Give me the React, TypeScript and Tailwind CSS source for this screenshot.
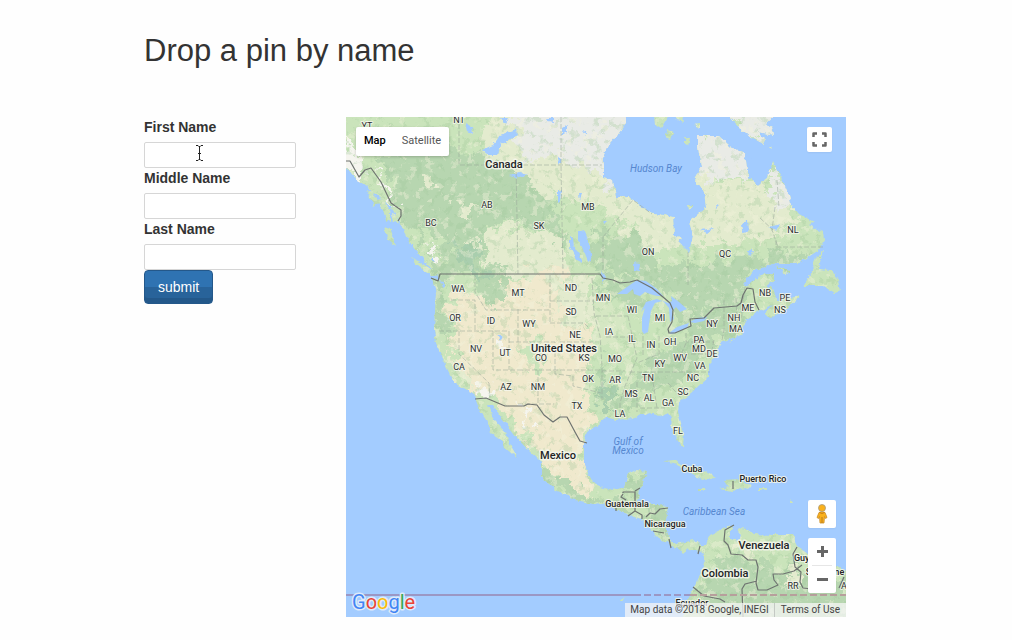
import { useId, useState } from "react";

type Label = [text: string, x: number, y: number];

const STATES: Label[] = [
  ["YT", 367, 129], ["NT", 459, 123], ["AB", 487, 208], ["BC", 431, 226], ["SK", 539, 229],
  ["MB", 588, 210], ["ON", 648, 255], ["QC", 725, 257], ["NL", 793, 233], ["WA", 458, 292],
  ["MT", 518, 296], ["ND", 571, 291], ["MN", 603, 301], ["OR", 455, 321], ["ID", 491, 324],
  ["WY", 529, 327], ["SD", 571, 315], ["WI", 632, 313], ["MI", 660, 321], ["IA", 609, 335],
  ["NE", 575, 338], ["NV", 476, 352], ["UT", 505, 356], ["CO", 541, 361], ["KS", 584, 361],
  ["MO", 615, 362], ["IL", 632, 342], ["IN", 651, 348], ["OH", 670, 345], ["KY", 660, 367],
  ["WV", 680, 361], ["CA", 459, 370], ["AZ", 506, 390], ["NM", 538, 390], ["OK", 588, 382],
  ["AR", 615, 383], ["TN", 648, 381], ["TX", 577, 409], ["MS", 631, 397], ["AL", 649, 401],
  ["GA", 668, 406], ["LA", 620, 417], ["SC", 683, 395], ["NC", 693, 381], ["VA", 700, 369],
  ["MD", 699, 352], ["DE", 712, 357], ["PA", 699, 343], ["NY", 712, 327], ["MA", 736, 332],
  ["NH", 734, 321], ["ME", 748, 311], ["NB", 765, 296], ["PE", 785, 301], ["NS", 780, 313],
  ["FL", 678, 434], ["RR", 793, 589], ["A", 844, 589],
];

const COUNTRIES: Label[] = [
  ["Canada", 504, 168], ["United States", 564, 352], ["Mexico", 558, 459],
  ["Venezuela", 764, 549], ["Colombia", 725, 577],
];

const SMALL_COUNTRIES: Label[] = [
  ["Cuba", 692, 472], ["Puerto Rico", 763, 482], ["Guatemala", 627, 507],
  ["Nicaragua", 665, 527], ["Guyana", 809, 561], ["Suriname", 825, 575], ["Ecuador", 692, 606],
];

const WATERS: Label[] = [
  ["Hudson Bay", 656, 172], ["Gulf of", 628, 445], ["Mexico", 628, 454], ["Caribbean Sea", 714, 515],
];

const MAINLAND =
  "M340 110L626 110L626 124L616 137L608 146L603 157L603 177L613 180L616 197L629 197L649 212L673 217L674 237L680 243L689 252L693 237L689 222L706 207L704 192L694 179L701 167L698 147L698 136L719 136L731 147L745 154L748 177L758 185L768 177L773 161L781 177L789 195L791 204L799 214L814 222L809 225L823 232L824 240L819 250L799 263L776 263L754 270L743 284L748 286L758 277L774 273L774 280L765 287L771 287L774 292L777 300L790 298L799 296L795 303L782 311L770 319L765 314L773 305L756 312L744 323L741 335L721 342L716 357L709 364L709 376L691 393L679 402L678 413L684 433L683 447L678 441L671 428L672 417L666 413L659 417L653 413L641 414L631 418L616 420L606 417L598 424L588 432L584 443L584 464L591 479L599 487L613 490L624 487L628 474L636 470L647 472L644 480L640 490L637 502L643 504L659 504L669 508L666 519L666 532L669 539L676 544L694 540L701 545L706 545L711 535L723 529L734 524L731 530L731 539L736 539L738 530L743 527L754 534L773 535L793 535L799 547L809 554L826 564L839 567L850 574L850 620L682 620L686 603L691 594L699 577L704 564L703 555L698 552L689 549L683 554L679 549L671 547L668 542L659 539L654 534L648 525L641 519L629 515L616 510L606 502L594 504L576 500L556 490L541 477L541 462L528 450L516 437L503 420L493 405L488 405L494 420L506 433L511 447L518 459L504 447L499 438L489 432L491 427L484 417L479 408L473 393L454 383L444 362L436 343L434 330L436 293L432 279L442 281L434 272L424 260L413 247L404 232L399 220L391 207L379 196L366 187L359 182L346 167L340 166Z";

const ISLANDS =
  "M411 258L423 263L438 275L431 276L418 266ZM384 227L390 229L395 246L388 240ZM366 190L372 192L378 203L374 206ZM375 200L383 199L391 211L386 214ZM383 211L391 213L391 222L386 220ZM392 214L397 216L399 225L394 222ZM367 187L373 188L375 196Z" +
  "M823 251L818 270L833 271L838 280L840 291L834 293L823 286L804 286L811 274L816 257Z" +
  "M728 115L739 127L752 138L764 144L766 140L758 132L774 135L772 127L766 124L776 115Z" +
  "M664 461L674 460L686 466L701 469L716 478L703 479L694 476L688 469L674 464Z" +
  "M724 480L740 479L751 487L741 489L733 491L719 489L729 487ZM697 489L706 489L704 491L697 491ZM759 488L767 488L767 490L759 490Z" +
  "M654 115L669 115L661 128L655 124ZM675 115L683 115L684 122L677 120ZM668 130L675 132L670 139L665 137ZM685 137L690 138L688 146L685 144ZM687 205L693 205L689 210ZM675 237L682 238L678 241ZM694 125L700 124L700 128ZM776 266L789 271L787 275ZM770 146L773 147L771 149Z" +
  "M790 500L792 503L790 503ZM786 306L796 299L796 303ZM622 597L624 601L621 601ZM731 341L736 339L730 343Z";

const GREAT_LAKES =
  "M617 294L627 287L637 280L646 281L657 289L663 296L657 296L650 294L645 292L640 296L634 294L633 289L627 294ZM642 331L642 318L645 308L641 312L646 302L657 299L662 301L655 303L651 311L649 324L648 332L644 334ZM661 300L668 303L672 301L671 296L679 302L687 309L680 312L676 307L672 311L674 319L670 322L669 308L664 302ZM669 333L677 327L689 323L687 328L672 334ZM690 322L697 318L707 317L704 321L695 323Z";

const LAKES =
  "M578 232L584 230L589 242L592 260L588 262L582 247L578 240ZM570 236L573 238L574 247L580 255L583 263L577 260L570 247ZM557 190L561 190L560 202L557 204ZM578 192L581 192L579 200ZM482 150L493 145L500 135L516 129L517 135L501 145L496 155L488 155ZM465 123L472 127L473 134L467 131ZM510 176L520 172L528 174L516 178ZM501 118L508 118L505 124ZM562 128L567 125L567 132L562 135ZM558 157L562 159L559 165ZM582 131L586 132L586 136ZM546 118L554 118L554 122L548 121Z" +
  "M741 225L748 220L749 231L743 233ZM700 230L714 228L707 233ZM768 227L780 224L777 230ZM751 158L755 160L752 163ZM716 205L720 206L717 209ZM747 250L753 250L750 256ZM634 263L640 264L639 271L634 270ZM601 270L606 278L602 282ZM498 335L503 338L501 341ZM432 257L435 262L431 260ZM440 281L444 282L444 288ZM603 220L607 221L604 224ZM666 512L671 515L667 516ZM737 531L741 535L739 541L735 540Z";

const STATE_LINES =
  "M459 117V165H602M561 117V165L563 274M516 165L518 274M603 237L633 200L652 214M603 237V270M451 300H475V331M439 331H509V370M459 331V354L489 383L490 398M493 331V370H518M518 309V342M475 275V292L486 310H516M509 342H555V370M516 310H550M550 275V323M550 301H594M550 323H584L590 329M560 342H596M518 370H602M538 370V404M518 404H554M555 371V374L573 376V386L601 393M592 278L594 313L600 336L602 366V400M596 316H628M628 316L633 340L637 358L625 386L620 403V415M606 337H630M643 336V356M659 336V354L637 363M602 371H625M630 372H680M637 382V412M653 382L657 408M640 408H665M668 383L681 398M686 333V342H714M684 354H712M680 372H710M686 343L678 362M724 300V330L722 340M736 298L737 321M714 340L712 350M745 287L741 318M688 252V285M777 180L779 207M760 218L773 230M776 240V247H823M775 207L772 230L778 247";

const BORDERS =
  "M346 161L350 161L359 177L365 170L371 168L381 182L391 203L401 210L401 216L398 221M431 278L438 281L440 274H600L603 278L613 280L620 283L630 282L637 280L652 288L663 297L670 303L673 310L672 322L668 329L669 333L675 333L691 326L690 319L704 318L714 308L737 306L741 303L743 295L747 288L753 289L755 302L759 310M475 399L486 398L505 406H524L528 404L537 405L544 415L553 422L560 417L567 417L575 432L580 441L587 443M623 493V492H635V511L628 516M635 491L640 488M623 494L621 497L626 500M616 508V511M635 511L642 515L642 519M646 517L650 513L655 514L660 509L668 508M653 531L664 533M669 539L671 548M700 546L698 554M734 525L725 530L724 541L728 545L731 554L742 555L748 560H756L758 567L756 583L758 590L767 590L778 585L774 580L773 574L783 574L794 571L802 565M797 547L793 554L795 567L801 572L800 582L803 588L812 589M812 565L815 585M825 565L829 586M839 588L844 577M757 581L745 584L742 589L743 617M693 587L704 596L720 599L725 602M733 481V489";

function HaloText({ items, className, halo = 2 }: { items: Label[]; className: string; halo?: number }) {
  return (
    <g
      className={className}
      textAnchor="middle"
      stroke="#f5f7ec"
      strokeOpacity="0.85"
      strokeWidth={halo}
      strokeLinejoin="round"
      paintOrder="stroke"
    >
      {items.map(([text, x, y]) => (
        <text key={`${text}-${x}-${y}`} x={x} y={y}>{text}</text>
      ))}
    </g>
  );
}

function TerrainMap() {
  return (
    <svg viewBox="346 117 500 500" className="block h-full w-full" role="img" aria-label="Map of North America">
      <defs>
        <filter id="coast" filterUnits="userSpaceOnUse" x="336" y="107" width="520" height="520" colorInterpolationFilters="sRGB">
          <feTurbulence type="fractalNoise" baseFrequency="0.18" numOctaves="3" seed="4" result="n" />
          <feDisplacementMap in="SourceGraphic" in2="n" scale="5" xChannelSelector="R" yChannelSelector="G" />
        </filter>
        <filter id="terrain" filterUnits="userSpaceOnUse" x="306" y="77" width="580" height="580" colorInterpolationFilters="sRGB">
          <feTurbulence type="fractalNoise" baseFrequency="0.07" numOctaves="4" seed="9" result="n" />
          <feDisplacementMap in="SourceGraphic" in2="n" scale="36" xChannelSelector="R" yChannelSelector="G" />
        </filter>
        <filter id="speckle-dark" filterUnits="userSpaceOnUse" x="346" y="117" width="500" height="500" colorInterpolationFilters="sRGB">
          <feTurbulence type="fractalNoise" baseFrequency="0.13" numOctaves="4" seed="21" />
          <feColorMatrix values="0 0 0 0 0.62  0 0 0 0 0.78  0 0 0 0 0.6  8 0 0 0 -4.5" />
        </filter>
        <filter id="speckle-light" filterUnits="userSpaceOnUse" x="346" y="117" width="500" height="500" colorInterpolationFilters="sRGB">
          <feTurbulence type="fractalNoise" baseFrequency="0.12" numOctaves="4" seed="33" />
          <feColorMatrix values="0 0 0 0 0.95  0 0 0 0 0.95  0 0 0 0 0.86  0 10 0 0 -5.9" />
        </filter>
        <clipPath id="land"><path d={MAINLAND + ISLANDS} /></clipPath>
      </defs>
      <rect x="346" y="117" width="500" height="500" fill="#a3ccff" />
      <g filter="url(#coast)">
        <g clipPath="url(#land)">
          <rect x="340" y="110" width="512" height="512" fill="#cae4bb" />
          <g filter="url(#terrain)">
            <path fill="#e3ebce" d="M500 90H640V190L690 215L690 245L650 250L600 215L555 195L500 190L480 140Z" />
            <path fill="#e9ebe6" d="M520 90H640V150L612 190L595 172L560 155L530 165L515 140ZM690 125L750 140L752 180L725 178L695 185Z" />
            <path fill="#e3ebce" d="M690 180L755 182L795 205L800 222L765 235L730 245L690 245Z" />
            <path fill="#e9ebe6" d="M768 158L780 170L790 200L778 212L772 190ZM720 110L780 110V150L735 135Z" />
            <path fill="#e3ebce" d="M488 228L520 228L565 240L572 275H488Z" />
            <path fill="#b7d6b0" d="M385 160L420 145L490 158L530 185L555 205L565 245L530 225L488 225L486 275H440L415 235L395 200Z" />
            <path fill="#b7d6b0" d="M595 230L640 240L655 262L700 262L760 255L815 248L800 268L750 276L735 300L690 322L665 290L620 275L595 270Z" />
            <path fill="#cae4bb" d="M418 225L445 235L442 262L425 252ZM575 200L600 205L635 225L600 232L580 225Z" />
            <path fill="#e3ebce" d="M455 202L478 206L476 212L458 212ZM426 180L436 184L434 192L428 190ZM466 236L472 240L484 256L474 250Z" />
            <path fill="#f0e9cd" d="M445 305L500 282L560 265L588 285L590 340L585 385L592 418L580 440L588 478L600 495L570 485L550 470L520 430L495 400L470 392L452 370L452 330Z" />
            <path fill="#b7d6b0" d="M428 272L450 278L444 305L446 335L434 335ZM473 268L505 270L500 305L480 298Z" />
            <path fill="#cae4bb" d="M524 345L540 340L542 372L530 372ZM446 340L456 345L466 368L460 366Z" />
            <path fill="#e3ebce" d="M552 275H592V318L580 330L560 315ZM450 355L465 370L478 390L456 382Z" />
            <path fill="#d5e7c3" d="M590 300L615 305L632 345L620 360L598 350ZM625 358L640 365L625 405L615 400Z" />
            <path fill="#b7d6b0" d="M592 275L645 285L640 310L612 300ZM655 352L692 340L700 355L680 385L640 395L625 410L612 405L640 380ZM597 362L612 368L612 408L600 406ZM685 330L748 290L745 325L720 342L695 345Z" />
            <path fill="#b7d6b0" d="M540 465L565 480L600 500L625 500L640 515L630 516L600 506L570 500L538 480ZM622 476H650V495H625ZM650 506H670V530H655ZM715 555L790 570L850 575V625H690L700 585Z" />
            <path fill="#a9ceae" d="M448 245L470 240L488 275L474 278ZM602 385H612V410H602Z" />
            <path fill="#e3ebce" d="M728 548H756V556H735ZM785 575L800 572V587L785 590Z" />
            <path fill="#f5f5ef" d="M346 135L356 155L366 165L366 183L346 168ZM374 168L390 195L400 208L392 208L376 182ZM422 246L440 252L436 260ZM494 335L500 336V352L494 350ZM520 404L532 420L528 425ZM484 386L498 390L495 400L480 395Z" />
          </g>
          <rect x="346" y="117" width="500" height="500" filter="url(#speckle-dark)" opacity="0.3" />
          <rect x="346" y="117" width="500" height="500" filter="url(#speckle-light)" opacity="0.4" />
        </g>
        <path d={LAKES} fill="#a3ccff" />
      </g>
      <path d={GREAT_LAKES} fill="#a3ccff" />
      <path d={STATE_LINES} fill="none" stroke="#9aa79a" strokeOpacity="0.55" strokeDasharray="5 2" strokeWidth="1" />
      <path d={BORDERS} fill="none" stroke="#6e7370" strokeWidth="1.2" strokeLinejoin="round" />
      <path d="M346 595H634" stroke="#9b97c4" strokeWidth="2" />
      <path d="M634 595H690" stroke="#9b97c4" strokeWidth="2" strokeDasharray="7 3" />
      <path d="M690 595H846" stroke="#b79f9c" strokeWidth="2" strokeDasharray="7 3" />
      <HaloText items={STATES} className="fill-[#2b2f31] font-['Roboto',sans-serif] text-[9px]" />
      <HaloText items={SMALL_COUNTRIES} className="fill-[#222426] font-['Roboto',sans-serif] text-[9px] font-medium" />
      <HaloText items={COUNTRIES} className="fill-[#222426] font-['Roboto',sans-serif] text-[11px] font-medium" halo={3} />
      <g textAnchor="middle" className="fill-[#5687cf] font-['Roboto',sans-serif] text-[10px] italic">
        {WATERS.map(([text, x, y]) => (
          <text key={`${text}-${y}`} x={x} y={y}>{text}</text>
        ))}
      </g>
    </svg>
  );
}

function GoogleLogo() {
  return (
    <svg width="68" height="26" viewBox="0 0 68 26" aria-label="Google">
      <text
        x="2"
        y="18"
        className="font-['Roboto',sans-serif] text-[20px]"
        stroke="#dfeafa"
        strokeWidth="3"
        strokeLinejoin="round"
        paintOrder="stroke"
      >
        <tspan fill="#4285f4">G</tspan>
        <tspan fill="#ea4335">o</tspan>
        <tspan fill="#fbbc05">o</tspan>
        <tspan fill="#4285f4">g</tspan>
        <tspan fill="#34a853">l</tspan>
        <tspan fill="#ea4335">e</tspan>
      </text>
    </svg>
  );
}

function Pegman() {
  return (
    <svg width="12" height="20" viewBox="0 0 12 20" aria-hidden="true">
      <path d="M3 8.500L1 13.500L2.500 14.500L3.500 12.500L4 19H8L8.500 12.500L9.500 14.500L11 13.500L9 8.500Q6 7 3 8.500Z" fill="#fbb11b" stroke="#c98d2a" strokeWidth="0.8" />
      <path d="M6 13V19" stroke="#b97a1e" strokeWidth="1" />
      <path d="M3.500 8.500Q6 10.500 8.500 8.500" fill="none" stroke="#c77e17" strokeWidth="1" />
      <circle cx="6" cy="4" r="3.500" fill="#fbb11b" stroke="#a69a83" strokeWidth="0.8" />
    </svg>
  );
}

function MapPanel() {
  const [view, setView] = useState("Map");
  return (
    <section className="relative aspect-square w-full max-w-[500px] overflow-hidden font-['Roboto',sans-serif]">
      <TerrainMap />
      <div className="absolute top-[10px] left-[10px] flex h-[29px] rounded-xs bg-white text-[11px] shadow-[0_1px_3px_rgba(0,0,0,0.2)]">
        {["Map", "Satellite"].map((name) => (
          <button
            key={name}
            type="button"
            onClick={() => setView(name)}
            className={name === view ? "px-2 font-medium text-black" : "px-2 text-[#565656]"}
          >
            {name}
          </button>
        ))}
      </div>
      <button type="button" aria-label="Toggle fullscreen view" className="absolute top-[10px] right-[14px] flex size-[25px] items-center justify-center rounded-xs bg-white shadow-xs">
        <svg width="15" height="15" viewBox="0 0 15 15" fill="none" stroke="#666" strokeWidth="2.500" strokeLinejoin="round" aria-hidden="true">
          <path d="M1.500 5V1.500H5M10 1.500H13.500V5M13.500 10V13.500H10M5 13.500H1.500V10" />
        </svg>
      </button>
      <button type="button" aria-label="Open street view" className="absolute right-[10px] bottom-[89px] flex size-7 items-center justify-center rounded-xs bg-white shadow-xs">
        <Pegman />
      </button>
      <div className="absolute right-[10px] bottom-[24px] w-7 rounded-xs bg-white px-1 shadow-xs">
        <button type="button" aria-label="Zoom in" className="flex h-[27px] w-full items-center justify-center">
          <svg width="11" height="11" viewBox="0 0 11 11" stroke="#666" strokeWidth="3" aria-hidden="true"><path d="M0 5.500H11M5.500 0V11" /></svg>
        </button>
        <div className="h-px bg-[#e6e6e6]" />
        <button type="button" aria-label="Zoom out" className="flex h-[27px] w-full items-center justify-center">
          <svg width="11" height="11" viewBox="0 0 11 11" stroke="#666" strokeWidth="3" aria-hidden="true"><path d="M0 5.500H11" /></svg>
        </button>
      </div>
      <a href="#google" className="absolute bottom-0 left-1"><GoogleLogo /></a>
      <div className="absolute right-0 bottom-0 flex h-[14px] items-center bg-[#f5f5f5]/75 text-[10px] leading-[14px] text-[#444]">
        <span className="px-[5px]">Map data ©2018 Google, INEGI</span>
        <a href="#terms" className="border-l border-[#c4c9c4] px-[6px]">Terms of Use</a>
      </div>
    </section>
  );
}

function Field({ label, pointer = false }: { label: string; pointer?: boolean }) {
  const id = useId();
  return (
    <div>
      <label htmlFor={id} className="mb-[5px] block text-[14px] leading-5 font-bold">{label}</label>
      <div className="relative">
        <input id={id} type="text" className="block h-[26px] w-full cursor-text rounded-xs border border-[#d6d6d6] bg-white px-1 text-sm outline-none focus:border-[#52a8ec]" />
        {pointer && (
          <svg className="pointer-events-none absolute top-[3px] left-[52px]" width="7" height="16" viewBox="0 0 7 16" fill="none" stroke="#222" aria-hidden="true">
            <path d="M0 0.500H2L3.500 2L5 0.500H7M3.500 1V15M0 15.500H2L3.500 14L5 15.500H7M2 8.500H5" />
          </svg>
        )}
      </div>
    </div>
  );
}

export default function App() {
  return (
    <main className="min-h-screen bg-[#fefefe] font-['Liberation_Sans',Arial,sans-serif] text-[#333]">
      <div className="mx-auto max-w-[724px] pt-[31px]">
        <h1 className="text-[31px] leading-10">Drop a pin by name</h1>
        <div className="mt-[46px] grid grid-cols-[152px_1fr] gap-[50px]">
          <form onSubmit={(event) => event.preventDefault()}>
            <Field label="First Name" pointer />
            <Field label="Middle Name" />
            <Field label="Last Name" />
            <button type="submit" className="block h-[34px] rounded border border-[#24588a] bg-linear-to-b from-[#2f73b2] from-50% to-[#28639a] to-50% px-[13px] text-[14px] text-white shadow-[inset_0_-5px_0_rgba(0,0,0,0.1)]">
              submit
            </button>
          </form>
          <MapPanel />
        </div>
      </div>
    </main>
  );
}
